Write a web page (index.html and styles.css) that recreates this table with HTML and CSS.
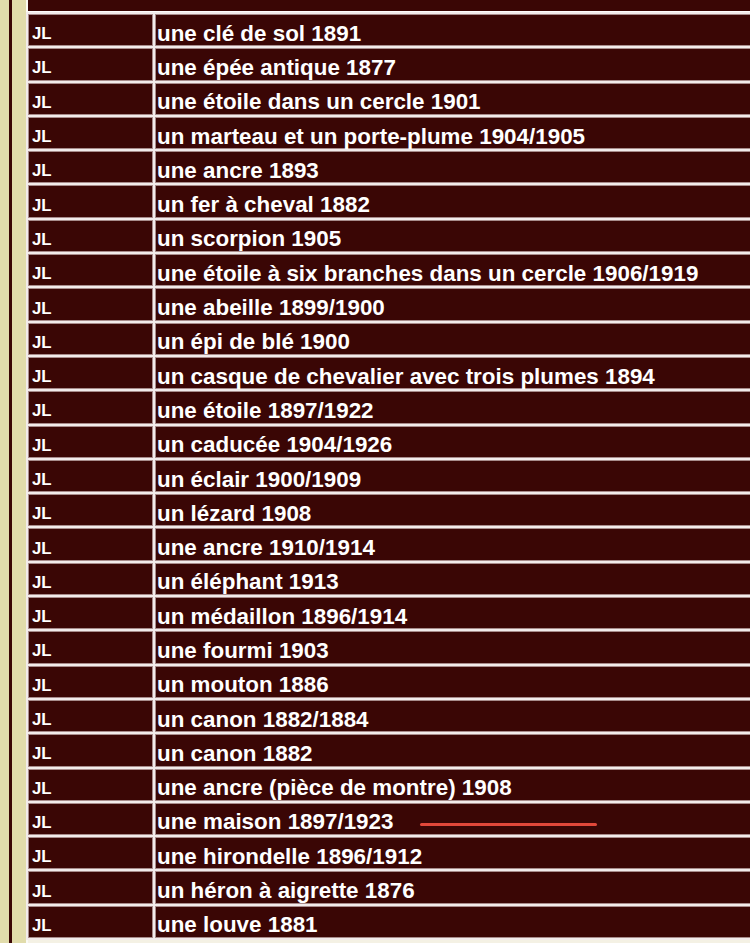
FILE: index.html
```html
<!DOCTYPE html>
<html lang="fr">

<head>
  <meta charset="UTF-8">
  <meta name="viewport" content="width=device-width, initial-scale=1.0">
  <title>Marques JL</title>
  <link rel="stylesheet" href="styles.css">
</head>

<body>
  <div class="frame">
    <!-- Left rail with the thin dark rule -->
    <div class="rail"><div class="rail-line"></div></div>

    <!-- Main listing -->
    <div class="content">
      <div class="top-band"></div>
      <table class="marks">
        <tr><td class="who"><span>JL</span></td><td class="what">une clé de sol 1891</td></tr>
        <tr><td class="who"><span>JL</span></td><td class="what">une épée antique 1877</td></tr>
        <tr><td class="who"><span>JL</span></td><td class="what">une étoile dans un cercle 1901</td></tr>
        <tr><td class="who"><span>JL</span></td><td class="what">un marteau et un porte-plume 1904/1905</td></tr>
        <tr><td class="who"><span>JL</span></td><td class="what">une ancre 1893</td></tr>
        <tr><td class="who"><span>JL</span></td><td class="what">un fer à cheval 1882</td></tr>
        <tr><td class="who"><span>JL</span></td><td class="what">un scorpion 1905</td></tr>
        <tr><td class="who"><span>JL</span></td><td class="what">une étoile à six branches dans un cercle 1906/1919</td></tr>
        <tr><td class="who"><span>JL</span></td><td class="what">une abeille 1899/1900</td></tr>
        <tr><td class="who"><span>JL</span></td><td class="what">un épi de blé 1900</td></tr>
        <tr><td class="who"><span>JL</span></td><td class="what">un casque de chevalier avec trois plumes 1894</td></tr>
        <tr><td class="who"><span>JL</span></td><td class="what">une étoile 1897/1922</td></tr>
        <tr><td class="who"><span>JL</span></td><td class="what">un caducée 1904/1926</td></tr>
        <tr><td class="who"><span>JL</span></td><td class="what">un éclair 1900/1909</td></tr>
        <tr><td class="who"><span>JL</span></td><td class="what">un lézard 1908</td></tr>
        <tr><td class="who"><span>JL</span></td><td class="what">une ancre 1910/1914</td></tr>
        <tr><td class="who"><span>JL</span></td><td class="what">un éléphant 1913</td></tr>
        <tr><td class="who"><span>JL</span></td><td class="what">un médaillon 1896/1914</td></tr>
        <tr><td class="who"><span>JL</span></td><td class="what">une fourmi 1903</td></tr>
        <tr><td class="who"><span>JL</span></td><td class="what">un mouton 1886</td></tr>
        <tr><td class="who"><span>JL</span></td><td class="what">un canon 1882/1884</td></tr>
        <tr><td class="who"><span>JL</span></td><td class="what">un canon 1882</td></tr>
        <tr><td class="who"><span>JL</span></td><td class="what">une ancre (pièce de montre) 1908</td></tr>
        <tr><td class="who"><span>JL</span></td><td class="what">une maison 1897/1923<span class="pen-mark"></span></td></tr>
        <tr><td class="who"><span>JL</span></td><td class="what">une hirondelle 1896/1912</td></tr>
        <tr><td class="who"><span>JL</span></td><td class="what">un héron à aigrette 1876</td></tr>
        <tr><td class="who"><span>JL</span></td><td class="what">une louve 1881</td></tr>
      </table>
    </div>
  </div>
</body>

</html>
```

FILE: styles.css
```css
/* Colours */
:root {
  --maroon: #3a0605;
  --beige: #e1dcab;
  --cream: #f4f1e4;
  --cell-line: #a88c8c;
  --gap: #f2ebeb;
  --pen: #e2483a;
}

* {
  margin: 0;
  padding: 0;
  box-sizing: border-box;
}

body {
  background: var(--beige);
  font-family: "Liberation Sans", Arial, sans-serif;
  overflow: hidden;
}

.frame {
  display: flex;
  min-height: 100vh;
}

/* Left rail */
.rail {
  width: 26px;
  flex: none;
}

.rail-line {
  margin-left: 9px;
  width: 3px;
  height: 100%;
  background: var(--maroon);
}

/* Content */
.content {
  flex: none;
  width: 800px;
  background: var(--cream);
  border-left: 2px solid #fbfaf4;
}

.top-band {
  height: 13px;
  background: var(--maroon);
  border-bottom: 2px solid #fdfcfc;
}

.marks {
  border-collapse: separate;
  border-spacing: 2px;
  margin-left: -2px;
  margin-top: -1px;
  background: var(--gap);
  width: 810px;
}

.marks td {
  background: var(--maroon);
  border: 1px solid var(--cell-line);
  color: #fff;
  height: 32.3px;
  vertical-align: middle;
  font-weight: bold;
  white-space: nowrap;
}

.who {
  width: 125px;
  padding: 8px 0 0 3px;
  font-size: 16px;
  line-height: 16px;
}

.who span {
  display: inline-block;
  transform: scaleX(1.05);
  transform-origin: left center;
}

.what {
  padding: 7px 0 0 1px;
  font-size: 22.4px;
  line-height: 22px;
}

/* Red pen stroke under one entry */
.pen-mark {
  display: inline-block;
  width: 177px;
  height: 3px;
  margin-left: 27px;
  border-radius: 2px;
  background: var(--pen);
  vertical-align: 3px;
}
```
